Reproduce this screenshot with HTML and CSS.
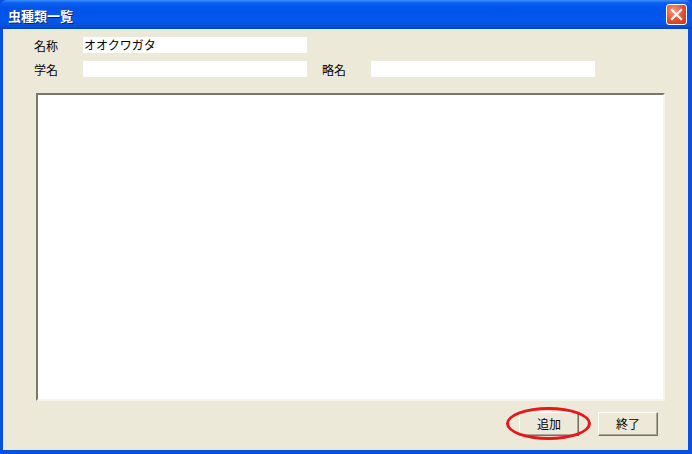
FILE: index.html
```html
<!DOCTYPE html>
<html lang="ja">

<head>
  <meta charset="UTF-8">
  <title>虫種類一覧</title>
  <link rel="stylesheet" href="styles.css">
</head>

<body>
<div class="window">
  <div class="title_bar">
    <span class="title_text">虫種類一覧</span>
    <div class="close_btn">
      <svg width="13" height="13" viewBox="0 0 13 13">
        <path d="M2 2 L11 11 M11 2 L2 11" stroke="#fff" stroke-width="2.2" stroke-linecap="square"/>
      </svg>
    </div>
  </div>
  <div class="window_body">
    <div class="form">
      <div class="form_row">
        <label>名称</label>
        <div class="field">オオクワガタ</div>
      </div>
      <div class="form_row">
        <label>学名</label>
        <div class="field"></div>
        <label class="label_short">略名</label>
        <div class="field"></div>
      </div>
    </div>
    <div class="list_box"></div>
    <div class="buttons">
      <div class="btn btn_add">追加<span class="mark"></span></div>
      <div class="btn">終了</div>
    </div>
  </div>
</div>
</body>

</html>
```

FILE: styles.css
```css
body {
  margin: 0;
  padding: 0;
  font-family: "Noto Sans CJK JP", "Liberation Sans", sans-serif;
  font-size: 12px;
}

.window {
  width: 692px;
  height: 454px;
  display: flex;
  flex-direction: column;
  background: #0a4fe0;
  box-sizing: border-box;
}

.title_bar {
  height: 29px;
  display: flex;
  align-items: center;
  justify-content: space-between;
  padding: 0 5px 0 8px;
  background: linear-gradient(#3d8ef8 0, #0a5ff0 3px, #0053e8 8px, #0058ee 20px, #0a4fd8 26px, #0044c8 29px);
  border-radius: 7px 7px 0 0;
}

.title_text {
  color: #fff;
  font-weight: bold;
  font-size: 13px;
  text-shadow: 1px 1px 0 #0a1e6e;
  padding-top: 1px;
}

.close_btn {
  width: 19px;
  height: 19px;
  border: 1px solid #fff;
  border-radius: 3px;
  background: radial-gradient(circle at 35% 30%, #f29a80, #e0502e 55%, #c1391a);
  display: flex;
  align-items: center;
  justify-content: center;
}

.window_body {
  flex: 1;
  margin: 0 4px 4px 3px;
  background: #ece9d8;
  display: flex;
  flex-direction: column;
}

.form {
  padding: 8px 0 0 31px;
  display: flex;
  flex-direction: column;
  gap: 8px;
}

.form_row {
  display: flex;
  align-items: center;
  height: 16px;
}

.form_row label {
  width: 49px;
  color: #000;
}

.form_row .label_short {
  width: 49px;
  margin-left: 15px;
}

.field {
  width: 223px;
  height: 16px;
  line-height: 16px;
  background: #fff;
  padding-left: 1px;
  color: #000;
}

.list_box {
  margin: 16px 0 0 33px;
  width: 625px;
  height: 304px;
  background: #fff;
  border-top: 2px solid #7a786c;
  border-left: 2px solid #7a786c;
  border-right: 2px solid #f4f3ee;
  border-bottom: 2px solid #f4f3ee;
}

.buttons {
  display: flex;
  justify-content: flex-end;
  gap: 19px;
  padding: 11px 30px 0 0;
}

.btn {
  position: relative;
  width: 58px;
  height: 22px;
  line-height: 22px;
  text-align: center;
  background: #ece9d8;
  border-top: 1px solid #fff;
  border-left: 1px solid #fff;
  border-right: 1px solid #716f64;
  border-bottom: 1px solid #716f64;
  box-shadow: inset -1px -1px 0 #aca899;
}

.mark {
  position: absolute;
  left: -14px;
  top: -6px;
  width: 79px;
  height: 27px;
  border: 3.5px solid #e8151b;
  border-radius: 50%;
}
```
